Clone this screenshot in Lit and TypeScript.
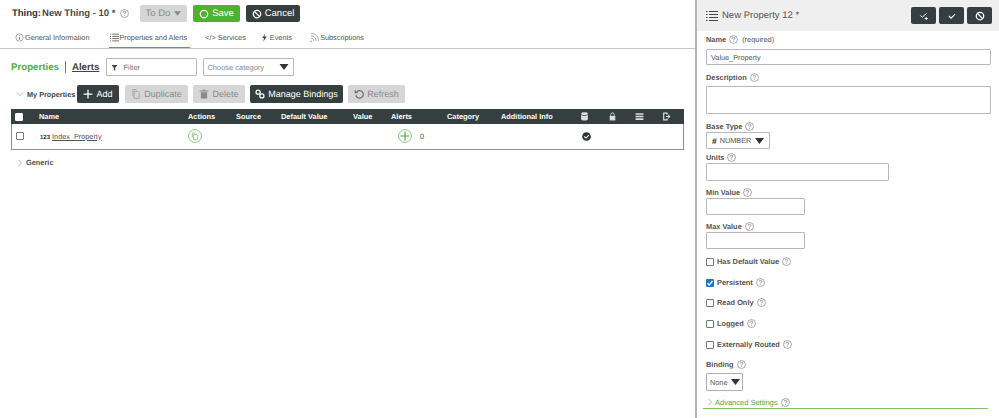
import { LitElement, html, css, svg } from "lit";
import { customElement } from "lit/decorators.js";

const help = html`<svg class="help" viewBox="0 0 10 10"><circle cx="5" cy="5" r="4.400" fill="none" stroke="#777" stroke-width=".7"/><path d="M3.600 4c0-1 .6-1.600 1.400-1.600S6.400 3 6.400 3.700C6.400 4.600 5 4.700 5 5.900M5 6.900v.8" fill="none" stroke="#777" stroke-width=".8"/></svg>`;
const caret = html`<svg class="caret" viewBox="0 0 12 8"><path d="M0 0h12L6 8z" fill="currentColor"/></svg>`;
const chev = (d: string) => html`<svg class="chev" viewBox="0 0 10 10"><path d="${d}" fill="none" stroke="#888" stroke-width=".8"/></svg>`;
const ic = (p: unknown, cls = "ic") => html`<svg class="${cls}" viewBox="0 0 16 16">${p}</svg>`;

const cols = ["Name", "Actions", "Source", "Default Value", "Value", "Alerts", "Category", "Additional Info"];

@customElement("app-root")
export class AppRoot extends LitElement {
  static styles = css`
    :host { display: flex; width: 999px; height: 418px; overflow: hidden; background: #fff; font-family: "Liberation Sans", Arial, sans-serif; color: #333; font-size: 7.400px; text-rendering: geometricPrecision; }
    .left { width: 695px; flex: none; border-right: 2px solid #b5b5b5; display: flex; flex-direction: column; }
    .top { display: flex; align-items: center; height: 17px; padding: 5px 0 2px 12px; }
    .title { font-size: 9.500px; font-weight: 700; color: #333; width: 128px; display: flex; align-items: center; white-space: nowrap; }
    .title span { margin-left: 1px; color: #4a4a4a; }
    .title .help { margin-left: 5px; }
    .help { width: 9px; height: 9px; flex: none; margin-left: 3px; }
    .btn { display: inline-flex; align-items: center; justify-content: center; gap: 3px; height: 17px; border-radius: 2px; font-size: 9.500px; box-sizing: border-box; background: #353f3f; color: #fff; white-space: nowrap; flex: none; }
    .btn.off { background: #d6d6d6; color: #8a8a8a; }
    .btn.green { background: #51b12d; color: #fff; }
    .ic { width: 10px; height: 10px; flex: none; }
    .caret { width: 9px; height: 6px; flex: none; }
    .chev { width: 8px; height: 8px; flex: none; }
    .todo { width: 47px; margin-right: 6px; gap: 4px; }
    .todo .caret { width: 7px; height: 5px; }
    .save { width: 47px; margin-right: 6px; }
    .cancel { width: 54px; }
    .tabs { display: flex; height: 19px; padding: 5px 0 0 15px; border-bottom: 1px solid #c4c4c4; flex: none; }
    .tab { display: flex; align-items: center; gap: 1px; height: 19px; box-sizing: border-box; padding-bottom: 3px; font-size: 7.300px; color: #555; white-space: nowrap; }
    .tab.active { border-bottom: 1px solid #51b12d; padding: 0 3px 2px 1px; margin-left: 19px; }
    .tab .ic { width: 9px; height: 9px; }
    .tab.services { margin-left: 15px; }
    .tab.events { margin-left: 14px; }
    .tab.subs { margin-left: 18px; }
    .filters { display: flex; align-items: center; margin-top: 9px; padding-left: 11px; height: 18px; }
    .props { font-size: 9.700px; font-weight: 700; color: #51b12d; }
    .sep { width: 1px; height: 12px; background: #777; margin: 0 6px; }
    .alerts { font-size: 9.700px; font-weight: 700; color: #444; text-decoration: underline; margin-right: 7px; }
    .field { display: flex; align-items: center; height: 18px; box-sizing: border-box; border: 1px solid #b9b9b9; font-size: 7.500px; color: #777; background: #fff; border-radius: 1px; flex: none; }
    .filter { width: 91px; padding-left: 4px; gap: 5px; margin-right: 6px; }
    .filter .ic { width: 7px; height: 7px; }
    .choose { width: 91px; padding: 0 4px 0 3px; justify-content: space-between; color: #888; }
    .choose .caret { color: #333; width: 10px; height: 6px; }
    .tools { display: flex; align-items: center; height: 18px; margin-top: 9px; padding-left: 16px; }
    .grouplabel { display: flex; align-items: center; gap: 3px; font-size: 7.300px; font-weight: 700; color: #444; width: 61px; flex: none; white-space: nowrap; }
    .tools .btn { margin-right: 5px; height: 18px; font-size: 9px; }
    .tools .btn.add { width: 42px; margin-right: 6px; }
    .tools .btn.dup { width: 63px; }
    .tools .btn.del { width: 52px; }
    .tools .btn.man { width: 93px; }
    .tools .btn.ref { width: 57px; }
    .table { margin: 6px 0 0 11px; width: 673px; box-sizing: border-box; border: 1px solid #8b8f8f; border-top: 0; flex: none; }
    .row { display: grid; grid-template-columns: 28px 149px 48px 45px 72px 38px 56px 54px 80px 28px 27px 27px 1fr; align-items: center; }
    .head { height: 15px; background: #353f3f; color: #fff; font-size: 7.400px; font-weight: 700; margin: 0 -1px; }
    .head .ic { width: 9px; height: 9px; margin-left: -1px; }
    .body { height: 25px; padding-bottom: 1px; box-sizing: border-box; }
    .cb { width: 6px; height: 6px; border: 1px solid #777; border-radius: 1px; margin-left: 4px; background: #fff; }
    .head .cb { border-color: #fff; }
    .name { font-size: 7.300px; color: #555; white-space: nowrap; }
    .name b { font-size: 6px; color: #333; }
    .round { width: 14px; height: 14px; display: block; margin-left: -1px; }
    .alertcell { padding-left: 7px; display: flex; align-items: center; gap: 8px; font-size: 7.400px; color: #555; grid-column: 7 / span 2; }
    .tick { width: 9px; height: 9px; display: block; grid-column: 10; }
    .generic { display: flex; align-items: center; gap: 2px; margin: 7px 0 0 16px; height: 11px; font-size: 7.400px; font-weight: 700; color: #555; }
    .right { flex: 1; min-width: 0; display: flex; flex-direction: column; }
    .rhead { display: flex; align-items: center; height: 31px; background: #efefef; padding: 0 7px 0 9px; font-size: 9.500px; color: #555; flex: none; white-space: nowrap; }
    .rhead .list { width: 12px; height: 12px; margin-right: 4px; }
    .rhead .spacer { flex: 1; }
    .rhead .btn { width: 25px; height: 17px; margin-left: 3px; }
    .form { padding: 3px 0 0 9px; display: flex; flex-direction: column; }
    .label { display: flex; align-items: center; height: 10px; font-size: 7.400px; font-weight: 700; color: #555; flex: none; white-space: nowrap; }
    .label em { font-style: normal; font-weight: 400; margin-left: 4px; }
    .input { box-sizing: border-box; border: 1px solid #b9b9b9; background: #fff; border-radius: 1px; display: flex; align-items: center; font-size: 7.300px; color: #555; padding-left: 4px; flex: none; white-space: nowrap; }
    .w285 { width: 285px; height: 16px; }
    .w183 { width: 183px; height: 18px; }
    .w100 { width: 99px; height: 17px; }
    .ta { height: 28px; }
    .sel { width: 64px; height: 17px; color: #555; gap: 3px; padding-left: 5px; }
    .sel b { font-size: 8.500px; color: #333; }
    .sel .caret { color: #333; margin-left: 1px; }
    .check { display: flex; align-items: center; height: 11px; gap: 3px; font-size: 7.400px; font-weight: 700; color: #555; flex: none; white-space: nowrap; }
    .check .help { margin-left: 0; }
    .box { width: 6px; height: 6px; border: 1px solid #777; border-radius: 1px; flex: none; background: #fff; }
    .checkbox { width: 8px; height: 8px; flex: none; }
    .binding { width: 37px; height: 18px; padding-left: 3px; gap: 4px; border-color: #b0b0b0; }
    .binding .caret { color: #333; }
    .adv { display: flex; align-items: center; gap: 1px; margin-top: 6px; height: 10px; font-size: 7.500px; color: #51a836; flex: none; white-space: nowrap; }
    .adv .help { margin-left: 2px; }
    .line { height: 1px; background: #7fc06a; margin: 1px 0 0 -3px; width: 285px; flex: none; }
    .g1 { height: 1px; flex: none; } .g3 { height: 3px; flex: none; }
    .g4 { height: 4px; flex: none; } .g5 { height: 5px; flex: none; } .g6 { height: 6px; flex: none; }
    .g7 { height: 7px; flex: none; } .g9 { height: 9px; flex: none; } .g10 { height: 10px; flex: none; }
  `;

  box(checked = false) {
    return checked
      ? html`<svg class="checkbox" viewBox="0 0 8 8"><rect width="8" height="8" rx="1" fill="#1f74d8"/><path d="M1.500 4.300 3.200 6 6.500 2" fill="none" stroke="#fff" stroke-width="1.300"/></svg>`
      : html`<span class="box"></span>`;
  }

  render() {
    const noCirc = svg`<circle cx="8" cy="8" r="6" fill="none" stroke="#fff" stroke-width="2"/><path d="M4 4l8 8" stroke="#fff" stroke-width="2"/>`;
    return html`
      <div class="left">
        <div class="top">
          <div class="title">Thing:<span>New Thing - 10 *</span>${help}</div>
          <div class="btn off todo">To Do ${caret}</div>
          <div class="btn green save">${ic(svg`<circle cx="8" cy="8" r="6" fill="none" stroke="#fff" stroke-width="2"/>`)} Save</div>
          <div class="btn cancel">${ic(noCirc)} Cancel</div>
        </div>
        <div class="tabs">
          <div class="tab">${ic(svg`<circle cx="8" cy="8" r="6.500" fill="none" stroke="#666"/><path d="M8 4v1.500M8 7v5" stroke="#666" stroke-width="1.400"/>`)} General Information</div>
          <div class="tab active">${ic(svg`<path d="M0 2h2M4 2h12M0 6h2M4 6h12M0 10h2M4 10h12M0 14h2M4 14h12" stroke="#555" stroke-width="1.500"/>`)} Properties and Alerts</div>
          <div class="tab services">&lt;/&gt; Services</div>
          <div class="tab events">${ic(svg`<path d="M9 1 4 9h3l-1 6 6-9H8z" fill="#444"/>`)} Events</div>
          <div class="tab subs">${ic(svg`<path d="M2 14a1 1 0 1 0 .1 0M2 9c3 0 5 2 5 5M2 5c5 0 9 4 9 9M2 1c8 0 13 5 13 13" fill="none" stroke="#888" stroke-width="1.300"/>`)}Subscriptions</div>
        </div>
        <div class="filters">
          <span class="props">Properties</span><span class="sep"></span><span class="alerts">Alerts</span>
          <div class="field filter">${ic(svg`<path d="M1 2h14L9.500 8.500V15h-3V8.500z" fill="#444"/>`)} Filter</div>
          <div class="field choose">Choose category ${caret}</div>
        </div>
        <div class="tools">
          <div class="grouplabel">${chev("M1 3l4 4 4-4")} My Properties</div>
          <div class="btn add">${ic(svg`<path d="M8 1v14M1 8h14" stroke="#fff" stroke-width="2"/>`)} Add</div>
          <div class="btn off dup">${ic(svg`<path d="M5 4h6l2 2v9H5zM3 11V1h6" fill="none" stroke="#999" stroke-width="1.200"/>`)} Duplicate</div>
          <div class="btn off del">${ic(svg`<path d="M3 5h10v10H3zM1 2.500h14v1.500H1zM6 1h4v1.500H6z" fill="#8a8a8a"/>`)} Delete</div>
          <div class="btn man">${ic(svg`<circle cx="5" cy="5" r="3.300" fill="none" stroke="#fff" stroke-width="2"/><circle cx="11" cy="11" r="3.300" fill="none" stroke="#fff" stroke-width="2"/>`)} Manage Bindings</div>
          <div class="btn off ref">${ic(svg`<path d="M4 5a6 6 0 1 1-1 5M2 2v4h4" fill="none" stroke="#666" stroke-width="1.800"/>`)} Refresh</div>
        </div>
        <div class="table">
          <div class="row head">
            <span class="cb"></span>
            ${cols.map((c) => html`<span>${c}</span>`)}
            ${ic(svg`<ellipse cx="8" cy="3" rx="6" ry="2.500" fill="#ddd"/><path d="M2 5v8c0 3 12 3 12 0V5c-2 2.500-10 2.500-12 0z" fill="#ddd"/>`)}
            ${ic(svg`<path d="M3 7h10v8H3z" fill="#ddd"/><path d="M5 7V4.500a3 3 0 0 1 6 0V7" fill="none" stroke="#ddd" stroke-width="1.600"/>`)}
            ${ic(svg`<path d="M1 2h14v3H1zM1 6.500h14v3H1zM1 11h14v3H1z" fill="#ddd"/>`)}
            ${ic(svg`<path d="M2 1h8v4H8V3H4v10h4v-2h2v4H2z" fill="#ddd"/><path d="M7 7h4V4l4 4-4 4V9H7z" fill="#ddd"/>`)}
          </div>
          <div class="row body">
            <span class="cb"></span>
            <span class="name"><b>123</b> <u>Index_Property</u></span>
            <svg class="round" viewBox="0 0 14 14"><circle cx="7" cy="7" r="6.400" fill="none" stroke="#6dbb55" stroke-width=".8"/><path d="M5.500 5.500h3l1.200 1.200v4H5.500zM4.300 8.500V4h3" fill="none" stroke="#6dbb55" stroke-width=".7"/></svg>
            <span class="alertcell">
              <svg class="round" viewBox="0 0 14 14"><circle cx="7" cy="7" r="6.400" fill="none" stroke="#6dbb55" stroke-width=".8"/><path d="M7 2.500v9M2.500 7h9" stroke="#51a836" stroke-width="1.200"/></svg>
              0
            </span>
            <svg class="tick" viewBox="0 0 10 10"><circle cx="5" cy="5" r="4.800" fill="#2f3535"/><path d="M2.500 5 4.500 6.800 7.600 3.500" fill="none" stroke="#fff" stroke-width="1.200"/></svg>
          </div>
        </div>
        <div class="generic">${chev("M3 1l4 4-4 4")} Generic</div>
      </div>
      <div class="right">
        <div class="rhead">
          <svg class="list" viewBox="0 0 16 16"><path d="M0 2h2M4 2h12M0 6h2M4 6h12M0 10h2M4 10h12M0 14h2M4 14h12" stroke="#444" stroke-width="1.400"/></svg>
          New Property 12 *
          <span class="spacer"></span>
          <div class="btn">${ic(svg`<path d="M2 7l3 3 7-6M9 12h5M11.500 9.500v5" fill="none" stroke="#fff" stroke-width="1.500"/>`)}</div>
          <div class="btn">${ic(svg`<path d="M3 8l3.500 3.500L13 5" fill="none" stroke="#fff" stroke-width="1.700"/>`)}</div>
          <div class="btn">${ic(noCirc)}</div>
        </div>
        <div class="form">
          <div class="label">Name ${help}<em>(required)</em></div><div class="g5"></div>
          <div class="input w285">Value_Property</div><div class="g7"></div>
          <div class="label">Description ${help}</div><div class="g4"></div>
          <div class="input w285 ta"></div><div class="g7"></div>
          <div class="label">Base Type ${help}</div><div class="g1"></div>
          <div class="input sel"><b>#</b> NUMBER ${caret}</div><div class="g3"></div>
          <div class="label">Units ${help}</div><div class="g1"></div>
          <div class="input w183"></div><div class="g6"></div>
          <div class="label">Min Value ${help}</div><div class="g1"></div>
          <div class="input w100"></div><div class="g6"></div>
          <div class="label">Max Value ${help}</div><div class="g1"></div>
          <div class="input w100"></div><div class="g7"></div>
          <div class="check">${this.box()} Has Default Value ${help}</div><div class="g10"></div>
          <div class="check">${this.box(true)} Persistent ${help}</div><div class="g9"></div>
          <div class="check">${this.box()} Read Only ${help}</div><div class="g10"></div>
          <div class="check">${this.box()} Logged ${help}</div><div class="g10"></div>
          <div class="check">${this.box()} Externally Routed ${help}</div><div class="g9"></div>
          <div class="label">Binding ${help}</div><div class="g4"></div>
          <div class="input binding">None ${caret}</div>
          <div class="adv">${chev("M3 1l4 4-4 4")} Advanced Settings ${help}</div>
          <div class="line"></div>
        </div>
      </div>
    `;
  }
}
